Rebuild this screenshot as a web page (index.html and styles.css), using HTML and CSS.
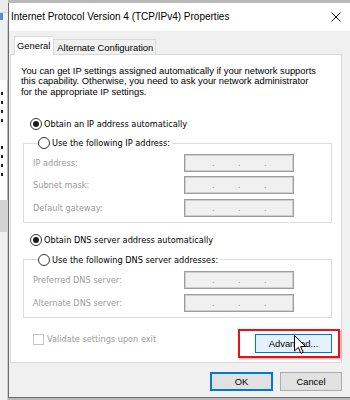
FILE: index.html
```html
<!DOCTYPE html>
<html>
<head>
<meta charset="utf-8">
<title>Internet Protocol Version 4 (TCP/IPv4) Properties</title>
<link rel="stylesheet" href="styles.css">
</head>
<body>
<div class="behind">
  <div class="bh-top"></div>
  <div class="bh-blue"></div>
  <div class="bh-gap"></div>
  <div class="bh-list">
    <span class="mark"></span><span class="mark"></span><span class="mark"></span><span class="mark"></span>
    <span class="mark gap"></span><span class="mark"></span><span class="mark"></span><span class="mark"></span>
  </div>
  <div class="bh-gray"></div>
  <div class="bh-rest"></div>
</div>
<div class="dialog">
  <div class="titlebar">
    <span class="title">Internet Protocol Version 4 (TCP/IPv4) Properties</span>
    <svg class="close" width="10" height="10" viewBox="0 0 10 10"><path d="M0.5 0.5L9.5 9.5M9.5 0.5L0.5 9.5" stroke="#111" stroke-width="1" fill="none"/></svg>
  </div>
  <div class="content">
    <div class="tabs">
      <div class="tab active">General</div>
      <div class="tab">Alternate Configuration</div>
    </div>
    <div class="panel">
      <p class="intro">You can get IP settings assigned automatically if your network supports<br>this capability. Otherwise, you need to ask your network administrator<br>for the appropriate IP settings.</p>

      <div class="radio-row first"><span class="radio on"></span><span class="rlabel">Obtain an IP address automatically</span></div>
      <fieldset class="group">
        <legend class="radio-row"><span class="radio"></span><span class="rlabel">Use the following IP address:</span></legend>
        <div class="field-row"><span class="flabel">IP address:</span><span class="ipbox"><i>.</i><i>.</i><i>.</i></span></div>
        <div class="field-row"><span class="flabel">Subnet mask:</span><span class="ipbox"><i>.</i><i>.</i><i>.</i></span></div>
        <div class="field-row"><span class="flabel">Default gateway:</span><span class="ipbox"><i>.</i><i>.</i><i>.</i></span></div>
      </fieldset>

      <div class="radio-row dns"><span class="radio on"></span><span class="rlabel">Obtain DNS server address automatically</span></div>
      <fieldset class="group group2">
        <legend class="radio-row"><span class="radio"></span><span class="rlabel">Use the following DNS server addresses:</span></legend>
        <div class="field-row"><span class="flabel">Preferred DNS server:</span><span class="ipbox"><i>.</i><i>.</i><i>.</i></span></div>
        <div class="field-row"><span class="flabel">Alternate DNS server:</span><span class="ipbox"><i>.</i><i>.</i><i>.</i></span></div>
      </fieldset>

      <div class="bottom-row">
        <div class="check"><span class="box"></span><span class="clabel">Validate settings upon exit</span></div>
        <div class="adv-wrap">
          <div class="btn adv">Advanced...</div>
          <div class="highlight"></div>
          <svg class="cursor" width="13" height="20" viewBox="0 0 13 20"><path d="M0.5 0.5L0.5 16L4.3 12.4L6.9 18.3L9.2 17.3L6.6 11.5L11.6 11.5Z" fill="#fff" stroke="#000" stroke-width="1" stroke-linejoin="miter"/></svg>
        </div>
      </div>
    </div>
    <div class="buttons">
      <div class="btn ok">OK</div>
      <div class="btn">Cancel</div>
    </div>
  </div>
</div>
</body>
</html>
```

FILE: styles.css
```css
html, body {
  margin: 0;
  padding: 0;
}
body {
  width: 350px;
  height: 400px;
  overflow: hidden;
  display: flex;
  background: #b9b9b9;
  font-family: "Liberation Sans", Arial, sans-serif;
}

/* window behind the dialog */
.behind {
  width: 8px;
  flex: none;
  display: flex;
  flex-direction: column;
  background: #f0f0f0;
}
.bh-top { height: 13px; background: #ececec; border-bottom: 1px solid #d4d4d4; box-sizing: border-box; }
.bh-blue { height: 7px; width: 3px; background: #5a8fc8; }
.bh-gap { height: 60px; border-right: 1px solid #cfcfcf; }
.bh-list {
  height: 120px;
  background: #fff;
  border-right: 1px solid #b8b8b8;
  display: flex;
  flex-direction: column;
  padding-top: 12px;
  gap: 6px;
  box-sizing: border-box;
}
.mark { display: block; width: 2px; height: 3px; background: #222; margin-left: 1px; }
.mark.gap { margin-top: 18px; }
.bh-gray { height: 32px; background: #d3d3d3; }
.bh-rest { flex: 1; background: #f0f0f0; border-right: 1px solid #cfcfcf; }

/* dialog */
.dialog {
  flex: 1;
  margin-top: 3px;
  height: 395px;
  box-sizing: border-box;
  border-left: 1px solid #6b6b6b;
  border-bottom: 1px solid #6b6b6b;
  background: #f0f0f0;
  display: flex;
  flex-direction: column;
}
.titlebar {
  height: 27px;
  flex: none;
  background: #fff;
  display: flex;
  align-items: center;
  justify-content: space-between;
  padding: 0 9px 1px 2px;
}
.title {
  font-size: 10px;
  color: #000;
}
.close { display: block; margin-top: 1px; }

.content {
  padding: 0 8px 0 1px;
  display: flex;
  flex-direction: column;
}
.tabs {
  display: flex;
  align-items: flex-end;
  margin: 5px 0 0 4px;
  position: relative;
  z-index: 1;
}
.tab {
  font-size: 9.4px;
  color: #000;
  box-sizing: border-box;
  border: 1px solid #d9d9d9;
  border-bottom: none;
  background: #f0f0f0;
  height: 15px;
  margin-bottom: 1px;
  padding: 0 2px 0 3px;
  display: flex;
  align-items: center;
}
.tab.active {
  background: #fff;
  height: 19px;
  margin-bottom: 0;
  padding: 0 3px 2px 2px;
  border-right: none;
}
.panel {
  margin-top: -1px;
  background: #fff;
  border: 1px solid #d9d9d9;
  padding: 11px 0 9px 0;
  display: flex;
  flex-direction: column;
}
.intro {
  margin: 0 0 0 10px;
  font-size: 9.4px;
  line-height: 10.3px;
  color: #000;
}

.radio-row {
  display: flex;
  align-items: center;
  height: 13px;
  font-family: "DejaVu Sans Condensed", "DejaVu Sans", sans-serif;
  font-stretch: condensed;
  font-size: 9.1px;
  color: #000;
}
.radio-row.first { margin: 21px 0 0 19px; }
.radio-row.dns { margin: 11px 0 0 19px; }
.radio {
  width: 12px;
  height: 12px;
  box-sizing: border-box;
  border: 1px solid #333;
  border-radius: 50%;
  background: #fff;
  flex: none;
  display: flex;
  align-items: center;
  justify-content: center;
  margin-right: 2px;
}
.radio.on::after {
  content: "";
  width: 6px;
  height: 6px;
  border-radius: 50%;
  background: #1a1a1a;
}

.group {
  margin: 6px 9px 0 12px;
  padding: 4px 0 5px 9px;
  border: 1px solid #dcdcdc;
  display: flex;
  flex-direction: column;
  gap: 4.5px;
  min-width: 0;
}
.group legend.radio-row {
  margin-left: 5px;
  padding: 0 2px 0 0;
  background: #fff;
}
.group2 { margin-top: 6.5px; padding-top: 4.5px; padding-bottom: 5.5px; gap: 4.7px; }

.field-row {
  display: flex;
  align-items: center;
  height: 18px;
}
.flabel {
  width: 151px;
  flex: none;
  font-family: "DejaVu Sans Condensed", "DejaVu Sans", sans-serif;
  font-stretch: condensed;
  font-size: 9.1px;
  color: #9a9a9a;
}
.ipbox {
  width: 110px;
  height: 18px;
  box-sizing: border-box;
  border: 1px solid #9c9c9c;
  box-shadow: inset 0 0 0 1px #cfcfcf;
  background: #f0f0f0;
  display: flex;
  align-items: flex-end;
  padding: 0 0 3px 27px;
  gap: 23px;
}
.ipbox i {
  font-style: normal;
  font-family: "DejaVu Sans", sans-serif;
  font-size: 8px;
  line-height: 8px;
  color: #8a8a8a;
  width: 3px;
}

.bottom-row {
  margin-top: 15px;
  display: flex;
  justify-content: space-between;
  align-items: flex-start;
}
.check {
  display: flex;
  align-items: center;
  margin-left: 22px;
  height: 12px;
}
.box {
  width: 11px;
  height: 11px;
  box-sizing: border-box;
  border: 1px solid #c6c6c6;
  background: #fff;
  margin-right: 3px;
}
.clabel {
  font-family: "DejaVu Sans Condensed", "DejaVu Sans", sans-serif;
  font-stretch: condensed;
  font-size: 9.1px;
  color: #9a9a9a;
}
.adv-wrap {
  position: relative;
  margin: 1px 9px 0 0;
}
.btn {
  box-sizing: border-box;
  height: 19px;
  border: 1px solid #adadad;
  background: #e1e1e1;
  font-size: 9.4px;
  color: #000;
  display: flex;
  align-items: center;
  justify-content: center;
}
.adv {
  width: 77px;
  border-color: #0078d7;
  background: #e5f1fb;
}
.highlight {
  position: absolute;
  left: -17px;
  top: -5px;
  width: 102px;
  height: 29px;
  box-sizing: border-box;
  border: 2px solid #e3121b;
  box-shadow: 1px 1px 2px rgba(0,0,0,0.35);
}
.cursor {
  position: absolute;
  left: 39px;
  top: 1px;
}
.buttons {
  display: flex;
  justify-content: flex-end;
  gap: 7px;
  margin-top: 9px;
}
.buttons .btn { width: 62px; }
.buttons .ok {
  width: 63px;
  border: 1px solid #0078d7;
  box-shadow: inset 0 0 0 1px #0078d7;
}
```
